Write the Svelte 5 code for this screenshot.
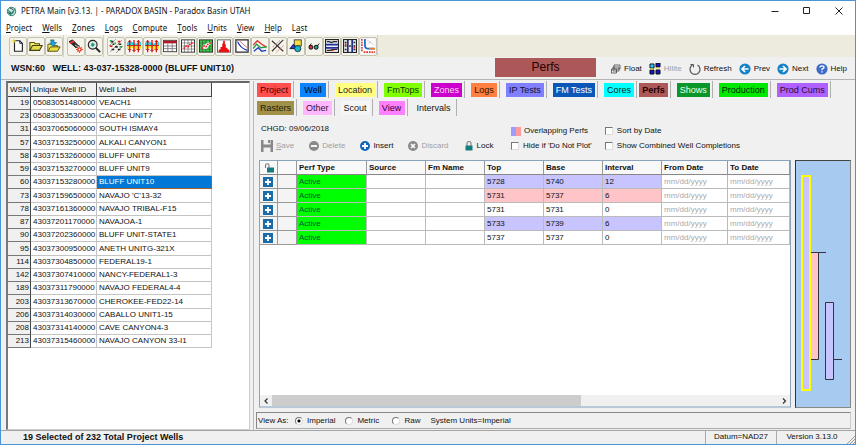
<script>
  const menus = ['Project', 'Wells', 'Zones', 'Logs', 'Compute', 'Tools', 'Units', 'View', 'Help', 'Last'];
  const accel = { Last: 1 };

  const toolGroups = [
    ['new', 'open', 'import'],
    ['torch', 'find'],
    ['map', 'xsec', 'xsec2', 'sheet', 'scatter', 'scatter2', 'histo', 'decline', 'curves', 'cross', 'shapes', 'glasses', 'strat', 'strat2', 'plot']
  ];

  const wells = [
    [19, '05083051480000', 'VEACH1'],
    [23, '05083053530000', 'CACHE UNIT7'],
    [31, '43037065060000', 'SOUTH ISMAY4'],
    [57, '43037153250000', 'ALKALI CANYON1'],
    [58, '43037153260000', 'BLUFF UNIT8'],
    [59, '43037153270000', 'BLUFF UNIT9'],
    [60, '43037153280000', 'BLUFF UNIT10'],
    [73, '43037159650000', "NAVAJO 'C'13-32"],
    [78, '43037161360000', 'NAVAJO TRIBAL-F15'],
    [87, '43037201170000', 'NAVAJOA-1'],
    [90, '43037202360000', 'BLUFF UNIT-STATE1'],
    [95, '43037300950000', 'ANETH UNITG-321X'],
    [114, '43037304850000', 'FEDERAL19-1'],
    [142, '43037307410000', 'NANCY-FEDERAL1-3'],
    [189, '43037311790000', 'NAVAJO FEDERAL4-4'],
    [203, '43037313670000', 'CHEROKEE-FED22-14'],
    [206, '43037314030000', 'CABALLO UNIT1-15'],
    [208, '43037314140000', 'CAVE CANYON4-3'],
    [213, '43037315460000', 'NAVAJO CANYON 33-I1']
  ];

  const tabRows = [
    [
      ['Project', '#ff5050', '#400'],
      ['Well', '#0a84ff', '#002'],
      ['Location', '#ffff80', '#222'],
      ['FmTops', '#80ff00', '#131'],
      ['Zones', '#cc00cc', '#fde'],
      ['Logs', '#ff8040', '#310'],
      ['IP Tests', '#8080ff', '#113'],
      ['FM Tests', '#0a57b8', '#fff'],
      ['Cores', '#00ffff', '#022'],
      ['Perfs', '#ad5858', '#200'],
      ['Shows', '#0a9628', '#efe'],
      ['Production', '#00e800', '#020'],
      ['Prod Cums', '#b060ff', '#213']
    ],
    [
      ['Rasters', '#a09048', '#221'],
      ['Other', '#ffb8ff', '#313'],
      ['Scout', '#f6f6f6', '#111'],
      ['View', '#ff80ff', '#303'],
      ['Intervals', '#f0f0f0', '#111']
    ]
  ];

  const columns = ['Perf Type', 'Source', 'Fm Name', 'Top', 'Base', 'Interval', 'From Date', 'To Date'];
  const perfs = [
    { top: 5728, base: 5740, interval: 12, tone: 'blue' },
    { top: 5731, base: 5737, interval: 6, tone: 'pink' },
    { top: 5731, base: 5731, interval: 0, tone: '' },
    { top: 5733, base: 5739, interval: 6, tone: 'blue' },
    { top: 5737, base: 5737, interval: 0, tone: '' }
  ];

  let selected = $state(60);
  let units = $state('Imperial');
</script>

{#snippet toolIcon(name)}
  <svg class="tool-icon" viewBox="0 0 16 16" aria-hidden="true">
    {#if name === 'new'}
      <path d="M4 2h6l3 3v9H4z" fill="#fff" stroke="#222" stroke-width="1.3" /><path d="M10 2v3h3" fill="none" stroke="#222" /><path d="M3 0v5M.5 2.500h5" stroke="#f5e53a" stroke-width="1.500" />
    {:else if name === 'open'}
      <path d="M1 13V4h5l1 1.500h5V8" fill="#f4ee6a" stroke="#55500a" stroke-width="1.200" /><path d="M1 13l3-5.500h11L12 13z" fill="#e4dc50" stroke="#44400a" stroke-width="1.200" />
    {:else if name === 'import'}
      <path d="M1 14V6h5l1 1.500h5V9" fill="#f4ee6a" stroke="#55500a" /><path d="M1 14l3-5h11l-3 5z" fill="#e8e040" stroke="#44400a" /><path d="M4 1h4v3h3L7 8.500 3 4.500h2z" fill="#18a8d8" stroke="#0a5a78" stroke-width=".7" />
    {:else if name === 'torch'}
      <path d="M0 3l4-2 7 7-3 2z" fill="#333" stroke="#111" /><path d="M1 5l5-3" stroke="#f33" stroke-width="1.800" /><path d="M7 7l3 2" stroke="#fff" /><circle cx="12" cy="12" r="1.900" fill="#fff" stroke="#e83018" stroke-width="1.600" /><path d="M12 7.500v2M12 14.500V16M8 12h1.500M14.500 12H16M9 9l1 1M15 9l-1 1M9 15l1-1" stroke="#e83018" />
    {:else if name === 'find'}
      <circle cx="6.500" cy="6.500" r="5" fill="#dfeee6" stroke="#222" stroke-width="1.300" /><path d="M4 7l2-3 3 2-2 3z" fill="#2b9a80" /><path d="M10 10l5 5" stroke="#222" stroke-width="2.200" />
    {:else if name === 'map'}
      <path d="M1 15L15 1M0 8L8 0M8 16l8-8" stroke="#999" /><path d="M2 3h3M4 6h2M7 9h3M10 12h3M3 12h3M11 6h3" stroke="#222" stroke-width="1.800" /><path d="M1 8h3M10 3h3" stroke="#d22" stroke-width="2" /><path d="M6 5h2M12 9h3M1 2h2" stroke="#2a4" stroke-width="2" />
    {:else if name === 'xsec' || name === 'xsec2'}
      <rect y="1" width="16" height="14" fill="#fff" /><path d="M0 4l5-1 5 2 6-2v4l-6 1-5-1-5 1z" fill="#20d8f0" /><path d="M0 8l5-1 5 1 6-1v4l-6 1-5-2-5 2z" fill="#ffe820" /><path d="M3 1v14M8 1v14M13 1v14" stroke="#e01818" stroke-width="1.600" /><path d="M0 7.500h16M1 12h4M6 13h4M11 12h4M1 3h4M11 3h4" stroke="#c01818" />
    {:else if name === 'sheet'}
      <rect x=".5" y="1.500" width="15" height="13" fill="#fff" stroke="#333" /><path d="M.5 2h15v3H.5z" fill="#b01828" /><path d="M1 8h14M1 11h14M5.500 5v9M10.500 5v9" stroke="#777" />
    {:else if name === 'scatter' || name === 'scatter2'}
      <rect x=".5" y="1" width="15" height="14" fill={name === 'scatter' ? '#fff' : '#3c4'} stroke="#222" /><path d="M.5 4.500h15M.5 8h15M.5 11.500h15M4 1v14M8 1v14M12 1v14" stroke="#444" stroke-width=".6" /><path d="M4 8l6-4h4l-5 7H5z" fill={name === 'scatter' ? 'none' : '#fff'} /><path d="M3 11l3-3 2 1 3-4 3-1" fill="none" stroke="#e22" stroke-width="1.800" stroke-dasharray="2 1" />
    {:else if name === 'histo'}
      <rect x=".5" y="1" width="15" height="14" fill="#fff" stroke="#555" /><path d="M2 15v-3h2V9h2V5h1V2h2v4h1v4h2v2h2v3z" fill="#e81010" />
    {:else if name === 'decline'}
      <rect x="1" y="1" width="14" height="14" fill="#fff" stroke="#333" stroke-width="1.500" /><path d="M3 3c2 5 5 8 11 10" fill="none" stroke="#2030c0" stroke-width="1.500" /><path d="M5 2l9 8" stroke="#c66" />
    {:else if name === 'curves'}
      <path d="M0 7l5-5 5 4 5 3" fill="none" stroke="#e03030" stroke-width="1.600" /><path d="M0 11l4-5 5 4 7-1" fill="none" stroke="#20a040" stroke-width="1.600" /><path d="M1 14l5-4 4 4 5-1" fill="none" stroke="#2040d0" stroke-width="1.600" />
    {:else if name === 'cross'}
      <path d="M1 2l13 12M1 14L14 1" stroke="#333" stroke-width="1.300" /><path d="M2 9l9-8M6 15l9-8" stroke="#d66" stroke-dasharray="2 1" />
    {:else if name === 'shapes'}
      <rect x="6" y="1" width="8" height="7" fill="#f5e040" stroke="#333" /><path d="M1 11l4-5 4 5z" fill="#2040d0" stroke="#113" /><circle cx="10" cy="11" r="3.500" fill="#18b8c8" stroke="#133" />
    {:else if name === 'glasses'}
      <circle cx="4.500" cy="9.500" r="2.200" fill="#e03030" stroke="#222" stroke-width="1.200" /><circle cx="10.500" cy="9.500" r="2.200" fill="#20a8a0" stroke="#222" stroke-width="1.200" /><path d="M2.500 8L5 5M12 8l2-3" fill="none" stroke="#222" />
    {:else if name === 'strat'}
      <rect x=".5" y=".5" width="15" height="15" fill="#eee" stroke="#222" stroke-width="1.500" /><path d="M1 6.500h14M1 10h14" stroke="#2030a0" stroke-width="2" /><path d="M2 3h3l2 1 3-1h4M2 13h4l2-1h6" fill="none" stroke="#222" stroke-width="1.400" /><path d="M7 13h3" stroke="#e22" stroke-width="1.500" />
    {:else if name === 'strat2'}
      <rect x=".5" y=".5" width="15" height="15" fill="#eee" stroke="#222" stroke-width="1.500" /><path d="M5.500 1v14M10.500 1v14" stroke="#223080" stroke-width="2" /><path d="M2 4h2M2 8h2M2 12h2M12 4h2M12 8h2M12 12h2M7 8h2" stroke="#222" stroke-width="1.600" /><path d="M2 6h2M12 10h2" stroke="#d33" stroke-width="1.500" />
    {:else}
      <path d="M0 0h16v16H0z" fill="#fff" /><path d="M1 0v14M3 15h13" stroke="#e03030" stroke-width="1.800" stroke-dasharray="2 1" /><path d="M4.500 0v7q0 4 4 4h7" fill="none" stroke="#1868d0" stroke-width="2" /><path d="M9 11h7" stroke="#f08020" stroke-width="1.800" /><path d="M7 1l8 6M8 6l4-4" stroke="#bbb" stroke-width=".8" />
    {/if}
  </svg>
{/snippet}

<div class="window">
  <header class="title">
    <svg class="logo" viewBox="0 0 12 12" aria-hidden="true"><circle cx="6" cy="6" r="4.600" fill="#cfe6e0" stroke="#2c7468" /><path d="M1 3l5 4 5-6-3 7-3 2z" fill="#2a8a78" /><path d="M4 2l4 2M2 7l3 2" stroke="#174a44" /></svg>
    <span class="caption">PETRA Main [v3.13. | - PARADOX BASIN - Paradox Basin UTAH</span>
    <div class="winbtns">
      <button aria-label="Minimize"><svg viewBox="0 0 8 8"><path d="M.5 4.500h7" /></svg></button>
      <button aria-label="Maximize"><svg viewBox="0 0 8 8"><path d="M.5 .5h6v6h-6z" /></svg></button>
      <button aria-label="Close"><svg viewBox="0 0 8 8"><path d="M.5 .5l7 7M7.500 .5l-7 7" /></svg></button>
    </div>
  </header>

  <nav class="menu">
    {#each menus as m}
      {@const i = accel[m] ?? 0}
      <button>{m.slice(0, i)}<u>{m[i]}</u>{m.slice(i + 1)}</button>
    {/each}
  </nav>

  <div class="toolbar">
    {#each toolGroups as group}
      <div class="group">
        {#each group as t}
          <button aria-label={t}>{@render toolIcon(t)}</button>
        {/each}
      </div>
    {/each}
  </div>

  <div class="wellbar">
    <strong class="current">WSN:60 &nbsp; WELL: 43-037-15328-0000 (BLUFF UNIT10)</strong>
    <div class="banner">Perfs</div>
    <div class="actions">
      <button><svg viewBox="0 0 10 10"><path d="M3 1h6v4H3zM2 3h6v4H2zM.5 5h5v4h-5z" fill="#f4f4f4" stroke="#444" stroke-width=".8" /></svg>Float</button>
      <button class="off"><svg class="big" viewBox="0 0 12 12"><path d="M1 1h4v4H1zM7 0h4v4H7zM1 7h4v4H1zM7 7h4v4H7z" fill="#1010d0" stroke="#111" /><path d="M1.500 1.500h3v3h-3z" fill="#20d8e0" /><path d="M0 6h4M6 5h5" stroke="#e8e040" /></svg>Hilite</button>
      <button><svg class="big" viewBox="0 0 12 12"><path d="M3.500 2A5 5 0 1 0 8.500 2" fill="none" stroke="#555" stroke-width="1.200" /><path d="M1.500 1.500h3v3" fill="none" stroke="#555" /></svg>Refresh</button>
      <button><svg class="big" viewBox="0 0 12 12"><circle cx="6" cy="6" r="5.600" fill="#1583c8" /><path d="M9.500 6H3M6 3L3 6l3 3" fill="none" stroke="#fff" stroke-width="1.700" /></svg>Prev</button>
      <button><svg class="big" viewBox="0 0 12 12"><circle cx="6" cy="6" r="5.600" fill="#1583c8" /><path d="M2.500 6H9M6 3l3 3-3 3" fill="none" stroke="#fff" stroke-width="1.700" /></svg>Next</button>
      <button><svg class="big" viewBox="0 0 12 12"><circle cx="6" cy="6" r="5.600" fill="#3c6cc8" /><path d="M4 4.500Q4 2.800 6 2.800T8 4.500Q8 5.500 6 6.200V7.200M6 8.300v1.300" fill="none" stroke="#fff" stroke-width="1.300" /></svg>Help</button>
    </div>
  </div>

  <main>
    <aside>
      <table class="wells">
        <colgroup><col class="c-wsn" /><col class="c-uwi" /><col /></colgroup>
        <thead><tr><th>WSN</th><th>Unique Well ID</th><th>Well Label</th></tr></thead>
        <tbody>
          {#each wells as [wsn, uwi, label]}
            <tr class:picked={wsn === selected} onclick={() => (selected = wsn)}>
              <th scope="row">{wsn}</th><td>{uwi}</td><td>{label}</td>
            </tr>
          {/each}
        </tbody>
      </table>
    </aside>

    <section class="detail">
      <div class="tabs">
        {#each tabRows as row}
          <div class="tabrow">
            {#each row as [name, bg, fg]}
              <button class:active={name === 'Perfs'}><span style="background:{bg};color:{fg}">{name}</span></button>
            {/each}
          </div>
        {/each}
      </div>

      <div class="controls">
        <div class="left">
          <div class="changed">CHGD: 09/06/2018</div>
          <div class="edit">
            <button class="off"><svg class="big" viewBox="0 0 12 12"><path d="M0 0h2.500v4.500h7V0H12v12H9.500V7.500h-7V12H0z" fill="#888" /><path d="M7 0h2v3H7z" fill="#888" /></svg><span><u>S</u>ave</span></button>
            <button class="off"><svg viewBox="0 0 10 10"><circle cx="5" cy="5" r="5" fill="#8a8a8a" /><path d="M2 5h6" stroke="#fff" stroke-width="1.800" /></svg>Delete</button>
            <button><svg viewBox="0 0 10 10"><circle cx="5" cy="5" r="5" fill="#1268b8" /><path d="M2 5h6M5 2v6" stroke="#fff" stroke-width="1.800" /></svg>Insert</button>
            <button class="off"><svg viewBox="0 0 10 10"><circle cx="5" cy="5" r="5" fill="#8a8a8a" /><path d="M3 3l4 4M7 3L3 7" stroke="#fff" stroke-width="1.600" /></svg>Discard</button>
            <button><svg viewBox="0 0 10 10"><path d="M3 5V2.500a2 2 0 0 1 4 0V5" fill="none" stroke="#888" stroke-width="1.200" /><path d="M1.500 4.500h7v5h-7z" fill="#147c80" /></svg>Lock</button>
          </div>
        </div>
        <div class="opts">
          <div class="legend"><i class="b"></i><i class="p"></i>Overlapping Perfs</div>
          <label><input type="checkbox" />Hide if 'Do Not Plot'</label>
        </div>
        <div class="opts">
          <label><input type="checkbox" />Sort by Date</label>
          <label><input type="checkbox" />Show Combined Well Completions</label>
        </div>
      </div>

      <div class="work">
        <div class="gridbox">
          <div class="clip">
            <table class="perfs">
              <colgroup>
                <col class="w-a" /><col class="w-b" /><col class="w-l" /><col class="w-m" /><col class="w-m" /><col class="w-m" /><col class="w-m" /><col class="w-m" /><col class="w-d" /><col />
              </colgroup>
              <thead>
                <tr>
                  <th aria-label="Lock"><svg class="lock" viewBox="0 0 10 10"><path d="M1.500 5V2.500a1.700 1.700 0 0 1 3.500 0V5" fill="none" stroke="#777" stroke-width="1.100" /><path d="M3 4.500h7v5H3z" fill="#147c80" /></svg></th>
                  <th aria-label="Marker"></th>
                  {#each columns as c}<th>{c}</th>{/each}
                </tr>
              </thead>
              <tbody>
                {#each perfs as p}
                  <tr>
                    <td class="plus"><button aria-label="Expand"><svg viewBox="0 0 10 10"><path d="M0 0h10v10H0z" fill="#1a6ca8" /><path d="M2 5h6M5 2v6" stroke="#fff" stroke-width="1.800" /></svg></button></td>
                    <td class="mark"></td>
                    <td class="active">Active</td>
                    <td></td>
                    <td></td>
                    <td class={p.tone}>{p.top}</td>
                    <td class={p.tone}>{p.base}</td>
                    <td class={p.tone}>{p.interval}</td>
                    <td class="ghost">mm/dd/yyyy</td>
                    <td class="ghost">mm/dd/yyyy</td>
                  </tr>
                {/each}
              </tbody>
            </table>
          </div>
          <div class="hscroll">
            <button aria-label="Scroll left"><svg viewBox="0 0 8 8"><path d="M5.500 1.500L3 4l2.500 2.500" /></svg></button>
            <div class="track"><div class="thumb"></div></div>
            <button aria-label="Scroll right"><svg viewBox="0 0 8 8"><path d="M3 1.500L5.500 4 3 6.500" /></svg></button>
          </div>
        </div>
        <div class="bore">
          <svg viewBox="0 0 54 246" preserveAspectRatio="xMinYMin meet" role="img" aria-label="Perforation intervals">
            <path d="M14.500 91.500h8v107h-8z" fill="#ffc4c8" stroke="#334" />
            <path d="M14 91.500h16M29.500 141.500h8v77h-8zM38 198.500h8" fill="#c8c4ff" stroke="#334" />
            <path d="M6 15h8v214H6z" fill="#c8c4ff" stroke="#ffff00" stroke-width="2" />
          </svg>
        </div>
      </div>

      <div class="viewas">
        <span class="lead">View As:</span>
        {#each ['Imperial', 'Metric', 'Raw'] as u}
          <label><input type="radio" name="units" value={u} bind:group={units} />{u}</label>
        {/each}
        <span>System Units=Imperial</span>
      </div>
    </section>
  </main>

  <footer>
    <strong>19 Selected of 232 Total Project Wells</strong>
    <span>Datum=NAD27</span>
    <span>Version 3.13.0</span>
    <svg class="grip" viewBox="0 0 8 8" aria-hidden="true"><path d="M0 8l8-8M3 8l5-5M6 8l2-2" stroke="#999" /></svg>
  </footer>
</div>

<style>
  :global(body) { background: #f0f0f0; }
  .window {
    box-sizing: border-box;
    display: flex;
    flex-direction: column;
    height: 100vh;
    border: 1px solid #4a94d8;
    background: #f0f0f0;
    color: #111;
    font: 8px/12px 'Liberation Sans', Arial, sans-serif;
    white-space: nowrap;
    overflow: hidden;
  }
  button {
    display: inline-flex;
    align-items: center;
    margin: 0;
    padding: 0;
    border: 0;
    background: none;
    color: inherit;
    font: inherit;
  }
  svg { display: block; flex: none; }
  table { border-collapse: separate; border-spacing: 0; table-layout: fixed; }
  th, td { box-sizing: border-box; padding: 0 2px; text-align: left; font-weight: 400; overflow: hidden; }

  .title, .menu { background: #fff; font-family: 'Noto Sans', 'Open Sans', sans-serif; }
  .title { display: flex; align-items: center; height: 20px; padding: 0 8px 0 5px; gap: 4px; }
  .logo { width: 11px; height: 11px; }
  .caption { flex: 1; }
  .winbtns { display: flex; gap: 24px; padding-right: 4px; }
  .winbtns svg { width: 8px; height: 8px; fill: none; stroke: #222; }
  .menu { display: flex; gap: 10px; height: 14px; padding-left: 5px; }

  .toolbar { display: flex; height: 22px; background: #ecebdd; }
  .group { display: flex; align-items: center; padding-left: 3px; border-right: 1px solid #d4d2c2; background: #f3f2e8; }
  .group:first-child { padding-left: 8px; }
  .group button { justify-content: center; box-sizing: border-box; width: 18px; height: 19px; border: 1px solid #c4c2b2; border-radius: 2px; background: #f5f4ec; }
  .tool-icon { width: 14px; height: 14px; }

  .wellbar { display: flex; align-items: center; height: 22px; border-bottom: 1px solid #b4b4b4; padding: 0 8px 0 10px; }
  .current { flex: 1; font-size: 9px; }
  .banner { width: 101px; height: 19px; margin: 0 15px 2px 0; background: #ad5858; color: #200; font-size: 12px; line-height: 19px; text-align: center; }
  .actions { display: flex; gap: 7px; padding-top: 2px; }
  .actions button, .edit button { gap: 3px; }
  .actions svg, .edit svg { width: 10px; height: 10px; }
  .actions .big, .edit .big { width: 12px; height: 12px; }
  .off { color: #a0a0a0; }

  main { flex: 1; display: flex; min-height: 0; padding-top: 1px; }
  aside { width: 244px; margin-left: 5px; border: 1px solid #aaa; border-width: 2px 1px 1px 2px; border-color: #666 #ccc #ccc #777; background: #fff; box-sizing: border-box; }
  .wells { width: 204px; }
  .c-wsn { width: 23px; }
  .c-uwi { width: 66px; }
  .wells th { border-right: 1px solid #444; border-bottom: 1px solid #777; background: #f0f0f0; }
  .wells thead th { height: 14px; border-bottom-color: #444; }
  .wells tbody th { text-align: right; padding-right: 1px; }
  .wells td { height: 13px; border-right: 1px solid #c4c4c4; border-bottom: 1px solid #c4c4c4; }
  .wells tr:nth-child(4n) td { height: 14px; }
  .wells .picked td:last-child { background: #0078d7; color: #fff; border-color: #a06030; }

  .detail { flex: 1; display: flex; flex-direction: column; min-width: 0; margin-left: 3px; border-left: 1px solid #bbb; padding: 0 4px 1px 2px; }
  .tabs { font-size: 9px; }
  .tabrow { display: flex; height: 18px; }
  .tabrow button { align-items: flex-start; height: 17px; padding: 2px 2px 0 6px; border-right: 1px solid #b0b0b0; }
  .tabrow button:first-child { padding-left: 1px; }
  .tabrow span { box-sizing: border-box; min-width: 26px; padding: 0 3px; line-height: 14px; text-align: center; }
  .tabrow .active { padding-left: 2px; }
  .tabrow .active span { font-weight: 700; }

  .controls { display: flex; height: 33px; padding: 5px 0 0 5px; }
  .left { width: 250px; }
  .changed { line-height: 14px; }
  .edit { display: flex; gap: 15px; padding-top: 4px; }
  .opts { display: flex; flex-direction: column; gap: 3px; padding-top: 3px; }
  .opts + .opts { margin-left: 13px; }
  .legend, .opts label, .viewas label { display: flex; align-items: center; }
  .legend i { width: 5px; height: 9px; background: #9c9cff; }
  .legend .p { background: #ff9c9c; margin-right: 3px; }
  input { appearance: none; flex: none; box-sizing: border-box; width: 8px; height: 8px; margin: 0 4px 0 0; border: 1px solid #888; border-color: #777 #ddd #ddd #777; background: #fff; }
  input[type='radio'] { border-radius: 50%; }
  input[type='radio']:checked { background: radial-gradient(#000 0 1px, #fff 2px); }

  .work { flex: 1; display: flex; min-height: 0; margin-top: 5px; padding-left: 3px; gap: 4px; }
  .gridbox { flex: 1; display: flex; flex-direction: column; min-width: 0; border: 1px solid #8aa4bc; border-bottom: 2px solid #b8c8d8; background: #fff; }
  .clip { flex: 1; min-height: 0; overflow: hidden; }
  .perfs { width: 530px; }
  .w-a { width: 18px; }
  .w-b { width: 19px; }
  .w-l { width: 70px; }
  .w-m { width: 59px; }
  .w-d { width: 66px; }
  .perfs th { height: 14px; border-right: 1px solid #999; border-bottom: 1px solid #888; background: #f8f8f8; font-weight: 700; }
  .perfs td { height: 14px; border-right: 1px solid #bbb; border-bottom: 1px solid #bbb; }
  .perfs .plus, .perfs .mark { background: #f4f4f4; border-color: #999; }
  .plus button { display: flex; margin-left: 1px; }
  .plus svg, .lock { width: 10px; height: 10px; }
  .lock { margin-left: 2px; }
  .perfs .active { background: #00ff00; color: #053; }
  .perfs .blue { background: #c8c4ff; }
  .perfs .pink { background: #ffc4c8; }
  .perfs .ghost { color: #aaa; }
  .hscroll { display: flex; height: 11px; background: #f0f0f0; }
  .hscroll button { justify-content: center; width: 12px; }
  .hscroll svg { width: 8px; height: 8px; fill: none; stroke: #333; stroke-width: 1.2; }
  .track { flex: 1; }
  .thumb { width: 61%; height: 100%; background: #cdcdcd; }
  .bore { box-sizing: border-box; width: 56px; border: 1px solid #888; border-left: 1px solid #333; border-top-color: #444; background: #a6caf0; overflow: hidden; }
  .bore svg { width: 54px; height: 246px; }

  .viewas { display: flex; align-items: center; height: 15px; margin-top: 4px; border: 1px solid #888; border-right-color: #ccc; border-bottom-color: #aaa; }
  .viewas .lead { width: 37px; padding-left: 1px; }
  .viewas label { min-width: 37px; margin-right: 10px; }
  .viewas label:last-of-type { min-width: 0; }

  footer { display: flex; height: 13px; border-top: 1px solid #a4a4a4; }
  footer strong { flex: 1; padding-left: 22px; font-size: 9px; }
  footer span { width: 70px; border-left: 1px solid #aaa; text-align: center; }
  .grip { width: 8px; height: 8px; align-self: flex-end; }
</style>
